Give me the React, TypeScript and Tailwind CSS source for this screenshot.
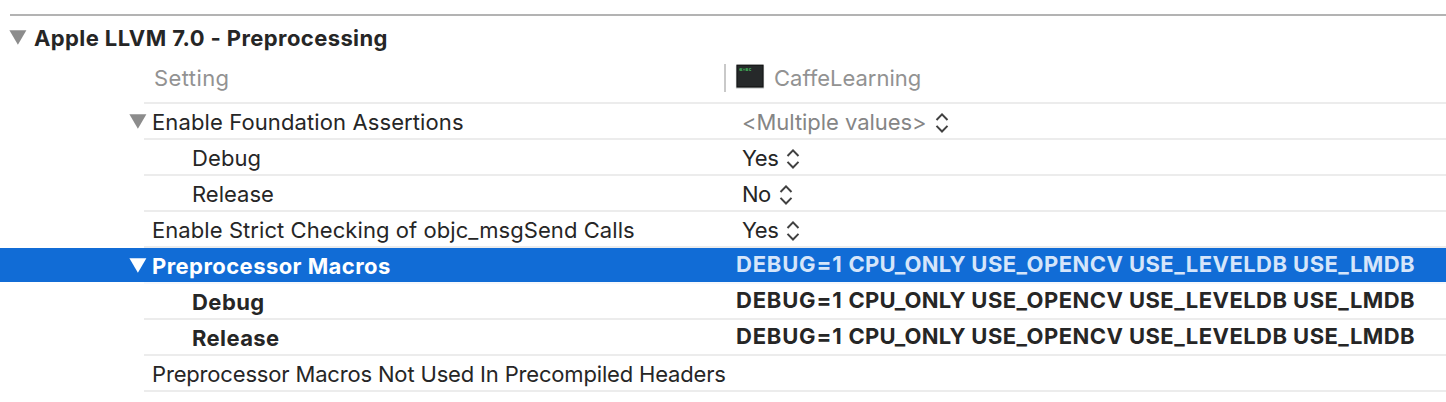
import type { ReactNode } from "react";

function Triangle({ className = "" }: { className?: string }) {
  return (
    <svg viewBox="0 0 18 15" className={`h-[15px] w-[18px] shrink-0 ${className}`} fill="currentColor">
      <path d="M0.4 0.2H17.4L8.9 14.8Z" />
    </svg>
  );
}

function Stepper() {
  return (
    <svg viewBox="0 0 14 20" className="h-5 w-3.5 shrink-0 text-[#414141]" fill="none" stroke="currentColor" strokeWidth="2">
      <path d="M1.5 7L7 1.4L12.5 7M1.5 12.9L7 18.5L12.5 12.9" />
    </svg>
  );
}

function TargetIcon() {
  return (
    <svg viewBox="0 0 30 26" className="h-[26px] w-[30px] shrink-0">
      <rect x="0.8" y="1" width="28.4" height="24" rx="1" fill="#d9dcdc" />
      <rect x="1.4" y="0.6" width="27.2" height="23" fill="#0f1111" />
      <rect x="2.4" y="1.6" width="25.2" height="20.8" fill="#26292a" />
      <g fill="none" stroke="#3fa655" strokeWidth="0.9">
        <path d="M7.2 6.5H4.8V4.6H6.8V5.6H4.8M8 4.5L10 6.6M10 4.5L8 6.6M13.2 6.5H11V4.6H12.8V5.6H11M16.2 4.6H14.3V6.5H16.2" />
      </g>
    </svg>
  );
}

type RowProps = {
  label: ReactNode;
  labelClass?: string;
  value?: ReactNode;
  valueClass?: string;
  open?: boolean;
  child?: boolean;
  selected?: boolean;
};

function Row({ label, labelClass = "", value, valueClass = "", open, child, selected }: RowProps) {
  return (
    <div className="flex h-9 flex-col">
      <div className={`flex h-[34px] items-start ${selected ? "bg-[#116cd6] text-white" : ""}`}>
        <div className="flex w-[152px] shrink-0 justify-end pt-2.5 pr-[5px]">
          {open && <Triangle className={selected ? "text-white" : "text-[#8c8c8c]"} />}
        </div>
        <div className={`w-[584px] shrink-0 pt-px ${child ? "pl-10" : ""} ${labelClass}`}>{label}</div>
        <div className={`flex ${valueClass}`}>{value}</div>
      </div>
      <div className={`ml-36 h-0.5 ${selected ? "bg-[#f6f8fc]" : "bg-[#ececec]"}`} />
    </div>
  );
}

function Choice({ children }: { children: ReactNode }) {
  return (
    <div className="flex gap-2 pt-px pl-1.5">
      <span>{children}</span>
      <div className="pt-2">
        <Stepper />
      </div>
    </div>
  );
}

function Macros() {
  return (
    <div className="-mt-px font-bold tracking-[0.445px] whitespace-pre">
      <span className="tracking-[0.8px]">DEBUG=1 </span>
      <span className="tracking-[0.25px]">CPU_ONLY </span>
      USE_OPENCV USE_LEVELDB USE_LMDB
    </div>
  );
}

export default function App() {
  return (
    <div className="h-[402px] w-[1446px] overflow-hidden bg-white font-['Inter',sans-serif] text-[22px] leading-[34px] whitespace-nowrap text-[#262626]">
      <div className="ml-2.5 pt-3.5">
        <div className="h-0.5 bg-[#b3b3b3]" />
      </div>
      <div className="flex h-[46px] pt-[5px]">
        <div className="w-[34px] shrink-0 pt-[9px] pl-[9px]">
          <Triangle className="text-[#8c8c8c]" />
        </div>
        <h1 className="font-bold tracking-[0.4px]">Apple LLVM 7.0 - Preprocessing</h1>
      </div>
      <div className="flex h-10 text-[#929292]">
        <div className="-mt-px w-[724px] shrink-0 pl-[154px] tracking-[0.4px]">Setting</div>
        <div className="mt-0.5 h-7 w-0.5 bg-[#c9c9c9]" />
        <div className="flex pl-[9px]">
          <div className="pt-0.5">
            <TargetIcon />
          </div>
          <span className="-mt-px pl-[9px]">CaffeLearning</span>
        </div>
      </div>
      <div className="ml-36 h-0.5 bg-[#ececec]" />
      <Row
        open
        label="Enable Foundation Assertions"
        labelClass="tracking-[0.11px]"
        value={<Choice><span className="tracking-[-0.05px] text-[#858585]">&lt;Multiple values&gt;</span></Choice>}
      />
      <Row child label="Debug" labelClass="tracking-[0.1px]" value={<Choice><span className="tracking-[-0.4px]">Yes</span></Choice>} />
      <Row child label="Release" value={<Choice><span className="tracking-[-0.5px]">No</span></Choice>} />
      <Row
        label="Enable Strict Checking of objc_msgSend Calls"
        labelClass="tracking-[0.07px]"
        value={<Choice><span className="tracking-[-0.4px]">Yes</span></Choice>}
      />
      <Row
        open
        selected
        label="Preprocessor Macros"
        labelClass="font-bold tracking-[0.44px]"
        value={<Macros />}
        valueClass="text-[#d5e5fa]"
      />
      <Row child label="Debug" labelClass="font-bold tracking-[0.45px]" value={<Macros />} />
      <Row child label="Release" labelClass="font-bold tracking-[0.39px]" value={<Macros />} />
      <Row label="Preprocessor Macros Not Used In Precompiled Headers" labelClass="tracking-[-0.17px]" />
    </div>
  );
}
